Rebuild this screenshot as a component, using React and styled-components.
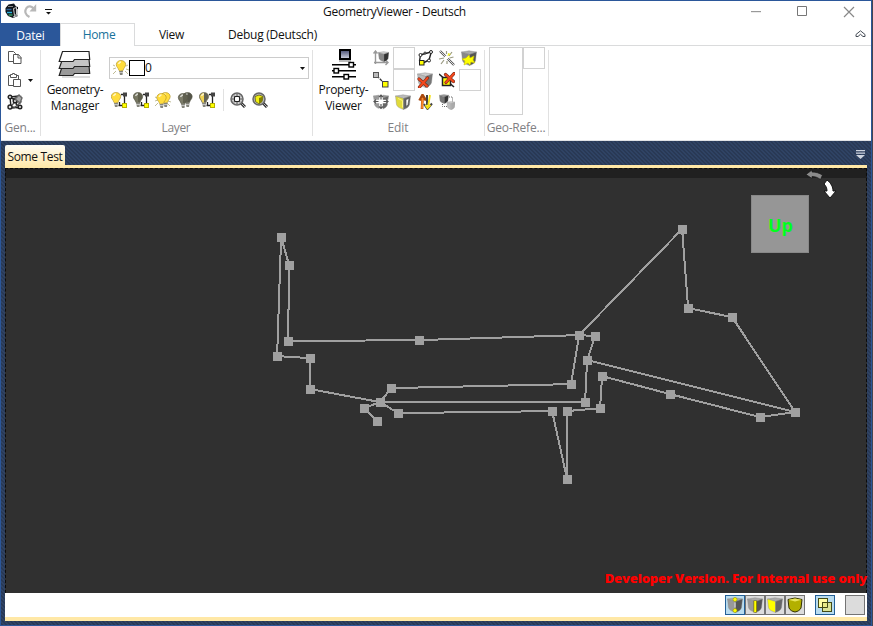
import React from "react";
import styled, { createGlobalStyle } from "styled-components";

const Global = createGlobalStyle`
  * { box-sizing: border-box; }
  body { margin: 0; overflow: hidden; background: #1d1d26; font: 12px/16px "Open Sans", "Noto Sans", sans-serif; color: #111; }
  svg { display: block; flex: none; }
`;

const Desktop = styled.div`width: 873px; height: 626px; background: #45454f; overflow: hidden;`;
const Window = styled.div`
  width: 872px; height: 626px; border: 1px solid #2b579a; background: #fff;
  display: flex; flex-direction: column; overflow: hidden;
`;
const Label = styled.span`
  white-space: pre; flex: none; letter-spacing: ${(p) => p.$ls || 0}px;
`;
const TitleBar = styled.header`height: 22px; flex: none; display: grid; grid-template-columns: 240px 306px 1fr; align-items: center;`;
const QuickAccess = styled.div`display: flex; align-items: center; gap: 4px; padding: 0 0 2px 4px;`;
const QuickMenuSlot = styled.div`padding: 1px 0 0 4px;`;
const Title = styled.div`text-align: center; padding-left: 1px;`;
const Caption = styled.div`display: flex; justify-content: flex-end; padding: 0 16px 1px 0; gap: 35px; align-items: center;`;

const TabStrip = styled.nav`height: 23px; flex: none; display: flex; border-bottom: 1px solid #dadbdc;`;
const Tab = styled.div`
  width: ${(p) => p.$w}px; height: 23px; flex: none; display: flex; align-items: center; justify-content: center;
  ${(p) => p.$kind === "file" && "background: #2b579a; color: #fff; padding-top: 2px;"}
  ${(p) => p.$kind === "active" && "background: #fff; color: #17729b; border: 1px solid #dadbdc; border-bottom: 0; padding-left: 3px;"}
`;
const Collapse = styled.div`margin-left: auto; padding: 7px 5px 0 0;`;

const Ribbon = styled.section`height: 95px; flex: none; display: flex; border-bottom: 1px solid #e1e3e6;`;
const Group = styled.div`
  width: ${(p) => p.$w}px; height: 90px; flex: none; display: grid; grid-template-rows: 74px 16px; 
  background: linear-gradient(#e1e1e1, #e1e1e1) right 4px / 1px 86px no-repeat;
`;
const GroupBody = styled.div`display: flex; align-items: flex-start; padding: ${(p) => p.$pad || "1px 0 0"}; height: 74px;`;
const GroupName = styled.div`text-align: center; color: #7f8083; padding-right: 2px; white-space: nowrap;`;
const Column = styled.div`display: grid; grid-template-columns: repeat(${(p) => p.$n || 1}, 22px); grid-auto-rows: 22px; flex: none;`;
const Cell = styled.div`
  width: ${(p) => p.$w || 22}px; height: ${(p) => p.$h || 22}px; display: flex; align-items: center; justify-content: center;
  border: ${(p) => (p.$empty ? "1px solid #d2d2d2" : "0")}; flex: none; padding-right: ${(p) => (p.$shift ? 2 : 0)}px;
`;
const PasteCell = styled.div`display: flex; align-items: center; gap: 5px; padding-left: 3px; width: 36px;`;
const BigButton = styled.div`
  width: ${(p) => p.$w}px; flex: none; display: flex; flex-direction: column; align-items: center; text-align: center; padding-top: ${(p) => p.$top}px;
`;
const BigCaption = styled.div`margin-top: ${(p) => p.$top}px; line-height: 16px; display: flex; flex-direction: column; align-items: center;`;
const LayerTools = styled.div`display: flex; flex-direction: column; width: 200px; padding-top: 10px;`;
const Combo = styled.div`height: 22px; border: 1px solid #ccc; display: flex; align-items: center; padding: 0 3px;`;
const Swatch = styled.i`width: 16px; height: 16px; border: 1px solid #000; background: #fff;`;
const ComboArrow = styled.div`margin-left: auto;`;
const ToolRow = styled.div`height: 22px; margin: 10px 0 0 -1px; display: flex; align-items: center;`;
const Divider = styled.i`width: 1px; height: 22px; background: #e1e1e1; margin: 0 3px 0 5px;`;

const Workspace = styled.main`
  flex: 1; padding: 4px; display: flex; flex-direction: column;
  background: repeating-linear-gradient(45deg, #293955 0 1.5px, #2f4364 1.5px 2.83px);
`;
const DocTabs = styled.div`
  height: 23px; flex: none; display: flex; justify-content: space-between; border-bottom: 3px solid #ffe8a6; width: 862px;
`;
const DocTab = styled.div`
  width: 60px; height: 23px; padding-top: 4px; text-align: center; border-radius: 2px 2px 0 0; background: linear-gradient(#fffcf3, #ffe8a6);
`;
const DocMenu = styled.div`padding: 5px 2px 0 0;`;
const Viewport = styled.div`
  width: 862px; height: 425px; flex: none; position: relative; background: linear-gradient(#202020 0 9px, #303030 9px);
  border: 1px dashed #0b0b0b; border-bottom: 0;
`;
const Scene = styled.svg`position: absolute; left: -1px; top: -1px;`;
const NavCube = styled.div`
  position: absolute; left: 745px; top: 26px; width: 58px; height: 58px; background: #969696; color: #00ff1c;
  border: 1px solid #888; display: flex; align-items: center; justify-content: center; font-size: 18px; font-weight: 700; padding: 1px 0 0 1px;
`;
const Notice = styled.div`
  position: absolute; right: -1px; bottom: 6px; color: #f00; font-size: 13px; line-height: 18px; font-weight: 800; white-space: nowrap;
  letter-spacing: ${(p) => p.$ls}px;
`;
const StatusBar = styled.footer`
  width: 862px; height: 28px; flex: none; background: #fff; border-bottom: 4px solid #ffe8a6; display: flex; padding: 2px 2px 0 0; justify-content: flex-end;
`;
const StatusButton = styled.div`
  width: 20px; height: 20px; border: 1px solid ${(p) => (p.$on ? "#246097" : "#747474")}; background: ${(p) => (p.$on ? "#b9dcef" : "#dcdcdc")};
  margin-left: ${(p) => p.$gap || 0}px; display: flex; align-items: center; justify-content: center;
`;

const Bulb = ({ x = 0, y = 0, left = "#ffdc3c", right = left, edge = "#a98b25" }) => (
  <g transform={`translate(${x} ${y})`}>
    <path d="M5 .5C2 .5 .3 2.500.3 4.500c0 2.500 2.200 3.500 2.700 6h4c.5-2.500 2.700-3.500 2.700-6C9.700 2.500 8 .5 5 .5z" fill={right} stroke={edge} strokeWidth=".6" />
    <path d="M5 1C2.500 1 1 3 1 4.500 1 7 3 8 3.500 10.500H5z" fill={left} />
    <path d="M2.500 4Q3.500 2 5 2" fill="none" stroke="#fff" strokeOpacity=".7" strokeWidth="1.500" />
    <path d="M3 11h4l-.5 4H4z" fill="#85857c" /><path d="M3 12.500h4" stroke="#ddd" strokeWidth=".7" />
  </g>
);
const Link = () => (
  <g>
    <path d="M13.500 4v8M7.500 13.500H12M10 2.500h3M8.500 10v3" stroke="#222" fill="none" strokeWidth="1.300" />
    <rect x="12" y=".5" width="4" height="4" fill="#444" />
    <rect x="11.500" y="11.500" width="4" height="4" fill="#ff0" stroke="#b7b100" />
  </g>
);
const Rays = () => <path d="M0 5l2 1M0 9l3-1M0 14l3-3M15 5l-2 1M16 10l-3-1M15 14l-3-3" stroke="#b8b48a" strokeWidth=".9" />;
const Cube = ({ l = "#999", r = "#555", t = "#ccc", s = "#888" }) => (
  <g stroke={s} strokeWidth=".4" strokeLinejoin="round">
    <path d="M.5 2L8 .8 15.500 2 8.500 4.500z" fill={t} />
    <path d="M.5 2l8 2.500v11C4 14 2 12.500 1.500 10.500z" fill={l} />
    <path d="M8.500 4.500l7-2.500-1 8.500c-.5 2-2.500 4-6 5z" fill={r} />
  </g>
);
const Cross = () => (
  <g strokeLinecap="round">
    <path d="M2 7l8 7M10.500 6L2.500 15" stroke="#762b1c" strokeWidth="3.200" />
    <path d="M2 7l8 7M10.500 6L2.500 15" stroke="#f4481c" strokeWidth="1.900" />
  </g>
);
const Lens = () => (
  <g>
    <path d="M11 11l4 4" stroke="#333" strokeWidth="3" /><path d="M11 11l4 4" stroke="#bbb" strokeWidth="1" />
    <circle cx="7" cy="7" r="6" fill="#b9b9b9" stroke="#666" strokeWidth="1.500" />
  </g>
);

const glyphs = {
  copy: <g fill="#fff" stroke="#555"><path d="M1.500 1.500h5l2 2v8h-7z" /><path d="M6.500 4.500h5l2.500 3v6H6.500zM11 4.500V8h3.500" /></g>,
  paste: <g fill="#fff" stroke="#555"><path d="M1.500 3.500h10v10h-10z" /><path d="M3.500 5.500v-3h2v-1h2v1h2v3z" /><path d="M6.500 7.500h7v7h-7z" /></g>,
  polyEdit: (
    <g fill="none" stroke="#222" strokeWidth="1.400">
      <path d="M3 3l9-1M3 3l1 10 9 1-4-4 4-7-7 2z" /><path d="M2 14l8-8 4 2-7 6z" stroke="#555" />
      <g fill="#ddd"><circle cx="3" cy="3" r="1.800" /><circle cx="8" cy="7" r="1.800" /><circle cx="3" cy="13" r="2" /><circle cx="13" cy="13" r="1.800" /></g>
      <path d="M8 5l4-4 3 3-2 5z" fill="#aaa" stroke="#666" />
    </g>
  ),
  bulb: <><Rays /><Bulb x={3} /></>,
  bulbLink: <><Bulb /><Link /></>,
  bulbOff: <><Bulb left="#777762" right="#5f5f4c" edge="#555545" /><Link /></>,
  bulbs: <><Rays /><Bulb x={5.5} /><Bulb x={1.5} y={1} /></>,
  bulbsOff: <><Bulb x={5.5} left="#68685a" right="#555549" edge="#555545" /><Bulb x={1} y={1} left="#7b7b68" right="#606050" edge="#555545" /></>,
  bulbHalf: <><Bulb left="#f0d454" right="#626254" edge="#777054" /><Link /></>,
  zoomAll: <><Lens /><path d="M7 2v10M2 7h10" stroke="#fff" strokeWidth="2.600" /><path d="M7 2v2M7 10v2M2 7h2M10 7h2M4.500 4.500h5v5h-5z" fill="none" stroke="#222" /></>,
  zoomSel: <><Lens /><path d="M3 4.500L7 3l4 1.500-1 5L7 12 3.500 9.500z" fill="#f2ef10" stroke="#5d5b10" strokeWidth=".8" /><path d="M7 6v6l3-2.500 1-5z" fill="#838000" /></>,
  extents: <><path d="M2.500 14V1M.5 3.500l2-2.500 2 2.500M1 12.500h14M12.500 10l2.500 2.500-2.500 2.500" fill="none" stroke="#999" strokeWidth="1.400" /><g transform="translate(5 1) scale(.7)"><Cube r="#333" l="#888" /></g></>,
  polyNode: (
    <>
      <path d="M3 5l11-3M14 3l-2 7M2.500 11l1-6M6 13l6-3" fill="none" stroke="#222" strokeWidth="1.400" />
      <g fill="#fff" stroke="#222"><circle cx="3.500" cy="5" r="1.500" /><circle cx="8" cy="3" r="1" /><circle cx="14" cy="2" r="1.500" /><circle cx="12" cy="10.500" r="1.500" /></g>
      <rect x="2.500" y="10.500" width="4.500" height="4.500" fill="#ff0" stroke="#222" />
    </>
  ),
  spark: (
    <>
      <path d="M1 1l14 14" stroke="#555" strokeWidth="2.300" /><path d="M1 1l14 14" stroke="#ddd" strokeWidth="1" />
      <circle cx="7.500" cy="7.500" r="2" fill="#fff" />
      <path d="M7.500 1v3M13 2l-3 4M14.500 7l-4 1M0 9l5-1M2 14l3-4M8 14v-3" stroke="#999980" strokeWidth="1.200" /><path d="M9 3L8.500 6.500 12 4z" fill="#ee3" />
    </>
  ),
  explode: <><Cube l="#888" r="#555" t="#aaa" /><path d="M1 9l4-1 3-3 1 3 4-2-1 4 2 3-4-1-1 3-2-2-4 2 1-4z" fill="#ff0" stroke="#c9c400" strokeWidth=".6" /></>,
  move: <><path d="M4 4l9 9" stroke="#333" strokeWidth="1.300" strokeDasharray="3 1" /><rect x=".5" y=".5" width="5" height="5" fill="#bbb" stroke="#555" /><rect x="9.500" y="9.500" width="5.500" height="5.500" fill="#ff0" stroke="#444" /></>,
  cubeDelete: <><Cube l="#bbb" r="#777" /><Cross /></>,
  nodeDelete: <><path d="M0 2l15 13" stroke="#222" strokeWidth="1.500" /><rect x="3.500" y="5.500" width="8" height="8" fill="#ff0" stroke="#222" strokeWidth="1.500" /><g transform="translate(4.500 -4.500)"><Cross /></g></>,
  moveAll: (
    <>
      <Cube l="#999" r="#666" t="#999" /><path d="M8 0v16M0 7.500h16" stroke="#fff" strokeWidth="3.600" />
      <path d="M8 1v4.500M8 10v4.500M1 7.500h4.500M10.500 7.500H15M6 3l2-2 2 2M6 12.500l2 2 2-2M3 5.500l-2 2 2 2M13 5.500l2 2-2 2" fill="none" stroke="#555" strokeWidth="1.200" />
    </>
  ),
  cubeYellow: <><Cube l="#e0da3b" r="#666" t="#bbb" /><path d="M11 5.500l3-1-1 6-2 2z" fill="#fff" stroke="#444" strokeWidth=".6" /><path d="M3 4.500l4.500 2v7" fill="none" stroke="#fff67b" /></>,
  swap: (
    <>
      <path d="M5 15l.5-11M2.500 6.500L5.500 1 9 6.500" fill="none" stroke="#a8480c" strokeWidth="2.600" /><path d="M5 14.500L5.500 4" stroke="#ff8a28" strokeWidth="1.700" />
      <path d="M10 1v10M7 10l3.500 5L15 9.500" fill="none" stroke="#444" strokeWidth="2" /><path d="M13 1l-2 12M8.500 11l2 3 3-3" fill="none" stroke="#f4df10" strokeWidth="1.800" />
    </>
  ),
  cubeCopy: <><path d="M10 3h3.500v5M3.500 10v2.500H8" fill="none" stroke="#666" strokeDasharray="1 1" /><g transform="scale(.62)"><Cube r="#333" l="#777" t="#999" /></g><g transform="translate(7.500 7) scale(.56)"><Cube r="#aaa" l="#bbb" /></g></>,
  pointMode: <><Cube t="#aaa" /><circle cx="8" cy="2.500" r="2" fill="#ff0" stroke="#888700" strokeWidth=".5" /><circle cx="8" cy="13.500" r="2" fill="#ff0" stroke="#888700" strokeWidth=".5" /><path d="M8 5.500v5" stroke="#ddd" /></>,
  edgeMode: <><Cube t="#aaa" /><path d="M8.200 3.500v12" stroke="#777100" strokeWidth="3.400" /><path d="M8.200 4v11" stroke="#ff0" strokeWidth="2" /></>,
  faceMode: <Cube l="#ff0" r="#666" t="#aaa" />,
  solidMode: (
    <>
      <path d="M1 2.500L8 1l7 1.500-1 8.500c-1 2-3 3.500-6 4-3-.5-5-2-6-4z" fill="#b3b000" stroke="#333100" />
      <path d="M1.500 2.700L8 1.500l6.500 1.200L8 4.500z" fill="#e9e65b" />
    </>
  ),
  overlay: <g stroke="#434a16" fill="#ffffa6"><rect x="1.500" y="1.500" width="9" height="9" /><rect x="5.500" y="5.500" width="9" height="9" fill="#e4e681" fillOpacity=".8" /><path d="M5.500 10.500h5v-5" fill="none" /></g>,
};
const Icon = ({ name }) => <svg width="16" height="16" viewBox="0 0 16 16">{glyphs[name]}</svg>;
const Arrow = () => <svg width="5" height="3" viewBox="0 0 5 3"><path d="M0 0h5L2.500 3z" fill="#111" /></svg>;

const AppLogo = () => (
  <svg width="15" height="16" viewBox="0 0 15 16">
    <path d="M3.500 1.500L9 .5l2 3 2 .5v9l-5 2-5-2L.5 9V5z" fill="#10151b" />
    <path d="M3 3.500h5" stroke="#888" /><path d="M1.500 6.500h5" stroke="#2f6196" strokeWidth="1.500" /><path d="M2 9.500h5" stroke="#2bb4e0" strokeWidth="1.500" /><path d="M3.500 12h4" stroke="#48da82" />
    <path d="M8.500 5.500l3-1v7l-2 1zM8 14l4.500-1.500V6" fill="none" stroke="#ccc" />
  </svg>
);
const RedoIcon = () => (
  <svg width="13" height="14" viewBox="0 0 13 14"><path d="M5.500 13C.8 10.500.5 7 2.500 4 4.500 1.500 7.500 2 9.500 4.500" fill="none" stroke="#b8b8b8" strokeWidth="2.200" /><path d="M12.200 0v7.500H5.500z" fill="#b8b8b8" /></svg>
);
const QuickMenu = () => <svg width="8" height="6" viewBox="0 0 8 6"><path d="M0 0h7v1H0zM1 3h5L3.500 5.500z" fill="#111" /></svg>;
const CaptionIcons = () => (
  <>
    <svg width="10" height="11" viewBox="0 0 10 11"><path d="M0 5h10v1.200H0z" fill="#999" /></svg>
    <svg width="12" height="11" viewBox="0 0 12 11"><path d="M1.500.5h9v9h-9z" fill="none" stroke="#777" /></svg>
    <svg width="12" height="12" viewBox="0 0 12 12"><path d="M1 1l10 10M11 1L1 11" stroke="#888" strokeWidth="1.200" /></svg>
  </>
);
const LayersIcon = () => (
  <svg width="34" height="30" viewBox="0 0 34 30">
    <path d="M4 27h28" stroke="#ddd" strokeWidth="2" />
    <g stroke="#222" strokeWidth="1.200">
      <path d="M4.500 15.500H31l.7 8H16.500l-1.500 2H1.200z" fill="#999" />
      <path d="M4.500 9H31l.7 7.500H16.500l-1.500 2H1.200z" fill="#c4c4c4" />
      <path d="M4.500 1.500H31l.7 8H16.500l-1.500 2H1.200z" fill="#fff" />
    </g>
  </svg>
);
const SlidersIcon = () => (
  <svg width="26" height="31" viewBox="0 0 26 31">
    <defs><linearGradient id="screen" x2="0" y2="1"><stop stopColor="#454b70" /><stop offset="1" stopColor="#d6d9e5" /></linearGradient></defs>
    <rect x="9" y="1" width="10" height="9" fill="url(#screen)" stroke="#000" strokeWidth="2" />
    <path d="M1 15h24v1.500H1zM1 21h24v1.500H1zM1 27h24v1.500H1z" fill="#000" /><path d="M8 12h12" stroke="#bbb" strokeWidth="2" />
    <g fill="#fff" stroke="#000" strokeWidth="1.400"><rect x="18" y="13.500" width="4.500" height="4.500" /><rect x="3" y="19.500" width="4.500" height="4.500" /><rect x="13" y="25.500" width="4.500" height="4.500" /></g>
  </svg>
);

const nodes = {
  a: [281, 237], b: [289, 265], c: [288, 341], d: [419, 340], e: [579, 335], f: [595, 336], g: [682, 229], h: [688, 308],
  i: [732, 317], j: [795, 412], k: [760, 417], l: [670, 394], m: [602, 376], n: [600, 408], o: [567, 411], p: [567, 479],
  q: [552, 411], r: [398, 413], s: [380, 402], t: [364, 408], u: [377, 421], v: [391, 388], w: [571, 384], x: [585, 402],
  y: [587, 360], z: [277, 356], A: [310, 358], B: [310, 389],
};
const paths = ["zabcdef", "fyxsvwegh", "hijy", "jklmnopqrstu", "sBAz"];

const Drawing = () => (
  <Scene width="862" height="425" viewBox="5 168 862 425">
    <g fill="none" stroke="#a0a0a0" strokeWidth="2" shapeRendering="crispEdges" transform="translate(.1 .1)">
      {paths.map((p) => <polyline key={p} points={[...p].map((n) => nodes[n].join(",")).join(" ")} />)}
    </g>
    <g fill="#a0a0a0">{Object.entries(nodes).map(([k, [x, y]]) => <rect key={k} x={x - 4} y={y - 4} width="9" height="9" />)}</g>
    <path d="M806 174.500l6-4.500v2c4 0 7 1 10.500 3l-2 4.500c-3-2-5-3-8.500-3v2z" fill="#8b8b8b" stroke="#171717" strokeWidth=".7" />
    <path d="M827 180c4 3 6 7 6 11h3l-6 7-6-7h3c0-3-1-5-3-7z" fill="#fff" stroke="#151515" />
  </Scene>
);

const editTools = ["extents", null, "polyNode", "spark", "explode", "move", null, "cubeDelete", "nodeDelete", null, "moveAll", "cubeYellow", "swap", "cubeCopy"];
const layerTools = ["bulbLink", "bulbOff", "bulbs", "bulbsOff", "bulbHalf"];

export default function App() {
  return (
    <Desktop>
      <Global />
      <Window>
        <TitleBar>
          <QuickAccess><AppLogo /><RedoIcon /><QuickMenuSlot><QuickMenu /></QuickMenuSlot></QuickAccess>
          <Title><Label $ls={-0.28}>GeometryViewer - Deutsch</Label></Title>
          <Caption><CaptionIcons /></Caption>
        </TitleBar>
        <TabStrip>
          <Tab $w={59} $kind="file"><Label $ls={-0.2}>Datei</Label></Tab>
          <Tab $w={75} $kind="active"><Label $ls={-0.3}>Home</Label></Tab>
          <Tab $w={73}><Label $ls={-0.3}>View</Label></Tab>
          <Tab $w={129}><Label $ls={-0.25}>Debug (Deutsch)</Label></Tab>
          <Collapse>
            <svg width="11" height="8" viewBox="0 0 11 8"><path d="M1 4.500L5.500.8 10 4.500v2H8L5.500 4.300 3 6.500H1z" fill="#fff" stroke="#444b55" /></svg>
          </Collapse>
        </TabStrip>
        <Ribbon>
          <Group $w={40}>
            <GroupBody $pad="1px 0 0 3px">
              <Column>
                <Cell><Icon name="copy" /></Cell>
                <PasteCell><Icon name="paste" /><Arrow /></PasteCell>
                <Cell><Icon name="polyEdit" /></Cell>
              </Column>
            </GroupBody>
            <GroupName><Label $ls={-0.2}>Gen...</Label></GroupName>
          </Group>
          <Group $w={272}>
            <GroupBody>
              <BigButton $w={68} $top={3}>
                <LayersIcon />
                <BigCaption $top={2}><Label $ls={-0.32}>Geometry-</Label><Label $ls={-0.15}>Manager</Label></BigCaption>
              </BigButton>
              <LayerTools>
                <Combo><Icon name="bulb" /><Swatch /><Label>0</Label><ComboArrow><Arrow /></ComboArrow></Combo>
                <ToolRow>
                  {layerTools.map((n) => <Cell key={n}><Icon name={n} /></Cell>)}
                  <Divider />
                  <Cell><Icon name="zoomAll" /></Cell><Cell><Icon name="zoomSel" /></Cell>
                </ToolRow>
              </LayerTools>
            </GroupBody>
            <GroupName><Label $ls={-0.35}>Layer</Label></GroupName>
          </Group>
          <Group $w={172}>
            <GroupBody $pad="1px 0 0 3px">
              <BigButton $w={55} $top={2}>
                <SlidersIcon />
                <BigCaption $top={2}><Label $ls={-0.3}>Property-</Label><Label $ls={-0.2}>Viewer</Label></BigCaption>
              </BigButton>
              <Column $n={5}>
                {editTools.map((n, i) => <Cell key={i} $empty={!n} $shift>{n && <Icon name={n} />}</Cell>)}
              </Column>
            </GroupBody>
            <GroupName><Label $ls={-0.1}>Edit</Label></GroupName>
          </Group>
          <Group $w={64}>
            <GroupBody $pad="1px 0 0 4px"><Cell $empty $w={34} $h={68} /><Cell $empty /></GroupBody>
            <GroupName><Label $ls={-0.2}>Geo-Refe...</Label></GroupName>
          </Group>
        </Ribbon>
        <Workspace>
          <DocTabs>
            <DocTab><Label $ls={-0.33}>Some Test</Label></DocTab>
            <DocMenu><svg width="9" height="9" viewBox="0 0 9 9"><path d="M0 0h9v1.200H0zM0 2.500h9v1.200H0zM0 5h9L4.500 9z" fill="#ced4df" /></svg></DocMenu>
          </DocTabs>
          <Viewport>
            <Drawing />
            <NavCube>Up</NavCube>
            <Notice $ls={-0.15}>Developer Version. For internal use only</Notice>
          </Viewport>
          <StatusBar>
            <StatusButton $on><Icon name="pointMode" /></StatusButton>
            <StatusButton><Icon name="edgeMode" /></StatusButton>
            <StatusButton><Icon name="faceMode" /></StatusButton>
            <StatusButton><Icon name="solidMode" /></StatusButton>
            <StatusButton $on $gap={10}><Icon name="overlay" /></StatusButton>
            <StatusButton $gap={10} />
          </StatusBar>
        </Workspace>
      </Window>
    </Desktop>
  );
}
